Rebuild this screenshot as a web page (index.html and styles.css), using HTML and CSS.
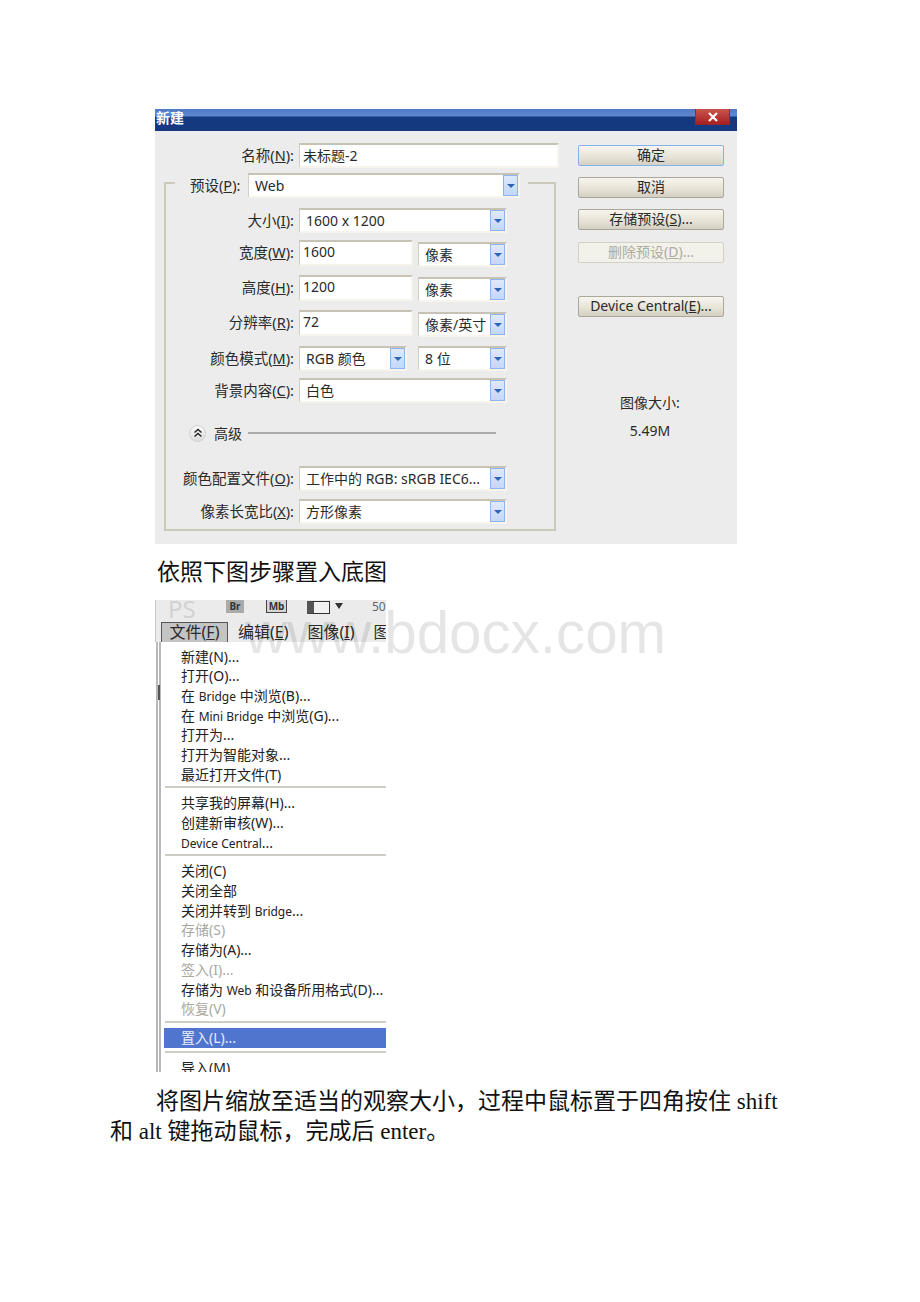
FILE: index.html
```html
<!DOCTYPE html>
<html lang="zh-CN">
    <head>
        <meta charset="UTF-8">
        <meta name="viewport" content="width=device-width, initial-scale=1.0">
        <title>新建</title>
        <link rel="stylesheet" href="styles.css">
    </head>
    <body>
        <div class="page">
            <div class="dialog">
                <div class="title-bar">
                    <span class="title-text">新建</span>
                    <span class="close-btn">
                        <svg width="12" height="10" viewBox="0 0 12 10"><path d="M2 1l8 8M10 1L2 9" stroke="#fff" stroke-width="2.2" fill="none"/></svg>
                    </span>
                </div>
                <div class="dialog-body">
                    <div class="form-col">
                        <div class="row row-name">
                            <label>名称(<u>N</u>):</label>
                            <div class="field name-field">未标题-2</div>
                        </div>
                        <div class="group">
                            <div class="preset-row">
                                <label>预设(<u>P</u>):</label>
                                <div class="field select preset-select"><span>Web</span><i class="arrow"></i></div>
                            </div>
                            <div class="row row-size">
                                <label>大小(<u>I</u>):</label>
                                <div class="field select"><span>1600 x 1200</span><i class="arrow"></i></div>
                            </div>
                            <div class="row row-dim">
                                <label>宽度(<u>W</u>):</label>
                                <div class="pair">
                                    <div class="field num">1600</div>
                                    <div class="field select unit"><span>像素</span><i class="arrow"></i></div>
                                </div>
                            </div>
                            <div class="row row-dim2">
                                <label>高度(<u>H</u>):</label>
                                <div class="pair">
                                    <div class="field num">1200</div>
                                    <div class="field select unit"><span>像素</span><i class="arrow"></i></div>
                                </div>
                            </div>
                            <div class="row row-dim2">
                                <label>分辨率(<u>R</u>):</label>
                                <div class="pair">
                                    <div class="field num">72</div>
                                    <div class="field select unit"><span>像素/英寸</span><i class="arrow"></i></div>
                                </div>
                            </div>
                            <div class="row row-mode">
                                <label>颜色模式(<u>M</u>):</label>
                                <div class="pair pair-mode">
                                    <div class="field select"><span>RGB 颜色</span><i class="arrow"></i></div>
                                    <div class="field select"><span>8 位</span><i class="arrow"></i></div>
                                </div>
                            </div>
                            <div class="row row-bg">
                                <label>背景内容(<u>C</u>):</label>
                                <div class="field select"><span>白色</span><i class="arrow"></i></div>
                            </div>
                            <div class="advanced">
                                <span class="adv-btn">
                                    <svg width="10" height="10" viewBox="0 0 10 10"><path d="M1.5 4.5L5 1.5l3.5 3M1.5 8.5L5 5.5l3.5 3" stroke="#222" stroke-width="1.4" fill="none"/></svg>
                                </span>
                                <span class="adv-text">高级</span>
                                <span class="adv-line"></span>
                            </div>
                            <div class="row row-icc">
                                <label>颜色配置文件(<u>O</u>):</label>
                                <div class="field select"><span>工作中的 RGB: sRGB IEC6...</span><i class="arrow"></i></div>
                            </div>
                            <div class="row row-ratio">
                                <label>像素长宽比(<u>X</u>):</label>
                                <div class="field select"><span>方形像素</span><i class="arrow"></i></div>
                            </div>
                        </div>
                    </div>
                    <div class="btn-col">
                        <div class="btn btn-default">确定</div>
                        <div class="btn">取消</div>
                        <div class="btn">存储预设(<u>S</u>)...</div>
                        <div class="btn btn-disabled">删除预设(<u>D</u>)...</div>
                        <div class="btn btn-device">Device Central(<u>E</u>)...</div>
                        <div class="info">图像大小:</div>
                        <div class="info info-value">5.49M</div>
                    </div>
                </div>
            </div>

            <p class="step-text">依照下图步骤置入底图</p>

            <div class="ps-shot">
                <div class="ps-toolbar">
                    <span class="ps-logo">PS</span>
                    <span class="ps-chip chip-br">Br</span>
                    <span class="ps-chip chip-mb">Mb</span>
                    <span class="ps-view"></span>
                    <span class="ps-tri"></span>
                    <span class="ps-zoom">50</span>
                </div>
                <div class="ps-menubar">
                    <span class="ps-top active">文件(<u>F</u>)</span>
                    <span class="ps-top">编辑(<u>E</u>)</span>
                    <span class="ps-top">图像(<u>I</u>)</span>
                    <span class="ps-top">图</span>
                </div>
                <div class="ps-menu">
                    <div class="item">新建(N)...</div>
                    <div class="item">打开(O)...</div>
                    <div class="item">在 <span class="en">Bridge</span> 中浏览(B)...</div>
                    <div class="item">在 <span class="en">Mini Bridge</span> 中浏览(G)...</div>
                    <div class="item">打开为...</div>
                    <div class="item">打开为智能对象...</div>
                    <div class="item">最近打开文件(T)</div>
                    <div class="sep"></div>
                    <div class="item">共享我的屏幕(H)...</div>
                    <div class="item">创建新审核(W)...</div>
                    <div class="item"><span class="en">Device Central</span>...</div>
                    <div class="sep"></div>
                    <div class="item">关闭(C)</div>
                    <div class="item">关闭全部</div>
                    <div class="item">关闭并转到 <span class="en">Bridge</span>...</div>
                    <div class="item off">存储(S)</div>
                    <div class="item">存储为(A)...</div>
                    <div class="item off">签入(I)...</div>
                    <div class="item">存储为 <span class="en">Web</span> 和设备所用格式(D)...</div>
                    <div class="item off">恢复(V)</div>
                    <div class="sep"></div>
                    <div class="item selected">置入(L)...</div>
                    <div class="sep sep-tight"></div>
                    <div class="item">导入(M)</div>
                </div>
            </div>

            <p class="para">将图片缩放至适当的观察大小，过程中鼠标置于四角按住 shift 和 alt 键拖动鼠标，完成后 enter。</p>

            <div class="watermark">www.bdocx.com</div>
        </div>
    </body>
</html>
```

FILE: styles.css
```css
* {
    margin: 0;
    padding: 0;
    box-sizing: border-box;
}

body {
    background: white;
    font-family: "Noto Sans", "Noto Sans CJK SC", sans-serif;
    color: #2a2a2a;
}

u {
    text-underline-offset: 1px;
}

.page {
    position: relative;
    width: 920px;
    min-height: 1302px;
    padding: 109px 138px 0 110px;
}

/* dialog */
.dialog {
    width: 582px;
    height: 435px;
    margin-left: 45px;
    background: #ececec;
    display: flex;
    flex-direction: column;
}

.title-bar {
    height: 22px;
    padding: 0 7px 0 1px;
    background: linear-gradient(#4f7ac6 0, #5f87cf 7px, #15397f 8px, #15397f 100%);
    display: flex;
    justify-content: space-between;
    align-items: flex-start;
}

.title-text {
    color: white;
    font-size: 14px;
    font-weight: 700;
    line-height: 18px;
}

.close-btn {
    width: 35px;
    height: 16px;
    background: linear-gradient(#c9564f, #a81f20);
    border: 1px solid #8d2a2a;
    border-top: none;
    display: flex;
    align-items: center;
    justify-content: center;
}

.dialog-body {
    display: flex;
    flex: 1;
}

.form-col {
    width: 401px;
    padding: 12px 0 0 9px;
}

.btn-col {
    width: 146px;
    margin-left: 22px;
    padding-top: 14px;
}

/* rows */
.row {
    display: grid;
    grid-template-columns: 128px 208px;
    column-gap: 5px;
    align-items: start;
}

.row label {
    font-size: 14.5px;
    line-height: 25px;
    text-align: right;
    white-space: nowrap;
}

.row-name {
    grid-template-columns: 130px 260px;
    margin-left: -9px;
    padding-left: 9px;
    margin-bottom: 14px;
}

.row-size { margin-top: 10px; }
.row-dim { margin-top: 7px; }
.row-dim2 { margin-top: 9px; }
.row-mode { margin-top: 10px; }
.row-bg { margin-top: 7px; }
.row-icc { margin-top: 21px; }
.row-ratio { margin-top: 8px; }

.row-dim .pair,
.row-dim2 .pair {
    height: 26px;
}

.field {
    height: 25px;
    font-size: 14px;
    line-height: 22px;
    background: white;
    border-top: 2px solid #c6c3b6;
    border-left: 1px solid #d2cfc4;
    border-right: 2px solid #f6f4ec;
    border-bottom: 2px solid #f6f4ec;
    white-space: nowrap;
    padding-left: 2px;
}

.name-field {
    padding-left: 3px;
}

.num {
    height: 26px;
    width: 114px;
    line-height: 20px;
    padding-left: 3px;
}

.select {
    display: flex;
    justify-content: space-between;
    padding: 0 0 0 6px;
}

.select span {
    overflow: hidden;
}

.arrow {
    width: 15px;
    height: 21px;
    margin-top: 0;
    background: linear-gradient(#dfe9fb, #c3d7f8);
    border: 1px solid #8db4ef;
    display: flex;
    align-items: center;
    justify-content: center;
    flex-shrink: 0;
}

.arrow::after {
    content: "";
    border-left: 4px solid transparent;
    border-right: 4px solid transparent;
    border-top: 4px solid #2f64b5;
}

.pair {
    display: flex;
    justify-content: space-between;
    align-items: flex-start;
}

.unit {
    width: 89px;
    margin-top: 2px;
}

.pair-mode .select:first-child {
    width: 108px;
}

.pair-mode .select:last-child {
    width: 89px;
}

/* group box */
.group {
    width: 392px;
    height: 349px;
    border: 2px solid #cbc8bc;
}

.preset-row {
    width: 353px;
    margin: -11px 0 0 9px;
    padding: 0 8px 0 15px;
    background: #ececec;
    display: flex;
    justify-content: space-between;
}

.preset-row label {
    font-size: 14.5px;
    line-height: 25px;
    white-space: nowrap;
}

.preset-select {
    width: 272px;
}

/* advanced toggle */
.advanced {
    height: 24px;
    margin-top: 18px;
    margin-left: 23px;
    display: flex;
    align-items: center;
}

.adv-btn {
    width: 17px;
    height: 17px;
    border-radius: 50%;
    background: linear-gradient(#fafafa, #dcdcdc);
    border: 1px solid #cfcfcf;
    display: flex;
    align-items: center;
    justify-content: center;
}

.adv-text {
    margin-left: 8px;
    font-size: 14px;
}

.adv-line {
    width: 248px;
    height: 2px;
    margin-left: 6px;
    background: #ababab;
}

/* buttons */
.btn {
    height: 21px;
    margin-bottom: 11px;
    font-size: 14px;
    line-height: 18px;
    text-align: center;
    white-space: nowrap;
    background: linear-gradient(#f7f5ef, #e6e2d6 60%, #d3cfc2);
    border: 1px solid #aaa79b;
    border-radius: 2px;
}

.btn-default {
    border: 1px solid #7fb4ee;
}

.btn-disabled {
    margin-top: 12px;
    color: #aeaca2;
    background: #f2f1ea;
    border-color: #d3d1c6;
}

.btn-device {
    margin-top: 33px;
}

.info {
    margin-top: 76px;
    height: 20px;
    padding-right: 2px;
    font-size: 14px;
    line-height: 20px;
    text-align: center;
}

.info-value {
    margin-top: 8px;
}

/* text */
.step-text {
    margin: 14px 0 13px 47px;
    font-family: "Liberation Serif", "Noto Sans CJK SC", serif;
    font-size: 23px;
    line-height: 29px;
    color: #111;
}

.para {
    margin-top: 15px;
    text-indent: 46px;
    font-family: "Liberation Serif", "Noto Sans CJK SC", serif;
    font-size: 23px;
    line-height: 30px;
    color: #111;
}

/* photoshop menu */
.ps-shot {
    width: 231px;
    height: 472px;
    margin-left: 45px;
    overflow: hidden;
    background: white;
}

.ps-toolbar {
    height: 22px;
    background: #ebebeb;
    display: flex;
    align-items: flex-start;
    overflow: hidden;
    border-left: 1px solid #c8c8c8;
}

.ps-logo {
    margin: -8px 0 0 12px;
    width: 58px;
    font-size: 24px;
    color: #d2d2d2;
}

.ps-chip {
    height: 13px;
    font-size: 10px;
    font-weight: 700;
    line-height: 12px;
    text-align: center;
    color: #333;
}

.chip-br {
    width: 18px;
    background: #aaa;
}

.chip-mb {
    width: 21px;
    margin-left: 22px;
    background: #d5d5d5;
    border: 1px solid #444;
    border-top: none;
}

.ps-view {
    width: 23px;
    height: 13px;
    margin: 1px 0 0 20px;
    background: #f2f2f2;
    border: 1px solid #333;
    border-left: 7px solid #555;
}

.ps-tri {
    margin: 3px 0 0 5px;
    border-left: 4px solid transparent;
    border-right: 4px solid transparent;
    border-top: 6px solid #333;
}

.ps-zoom {
    margin-left: 29px;
    font-size: 12px;
    line-height: 13px;
    color: #666;
}

.ps-menubar {
    height: 20px;
    background: #ebebeb;
    display: flex;
    padding-left: 5px;
    font-size: 16px;
    line-height: 20px;
    white-space: nowrap;
    border-left: 1px solid #c8c8c8;
    overflow: hidden;
}

.ps-top {
    flex-shrink: 0;
    margin-right: 19px;
}

.ps-top.active {
    width: 67px;
    margin-right: 10px;
    line-height: 18px;
    text-align: center;
    background: #c4c4c4;
    border: 1px solid #555;
    border-bottom: none;
}

.ps-menu {
    position: relative;
    margin-left: 1px;
    padding-top: 4.5px;
    border-left: 5px double #b9b9b9;
    font-size: 14px;
}

.ps-menu::before {
    content: "";
    position: absolute;
    left: -3px;
    top: 43px;
    width: 2px;
    height: 15px;
    background: #555;
}

.item {
    height: 19.7px;
    line-height: 19.7px;
    padding-left: 20px;
    white-space: nowrap;
    color: #222;
}

.en {
    font-size: 12px;
}

.item.off {
    color: #aaa99f;
}

.item.selected {
    height: 20px;
    line-height: 20px;
    margin-left: 3px;
    padding-left: 17px;
    background: #4f75cf;
    color: #e8edf9;
}

.sep {
    height: 2px;
    margin: 2px 0 5px 4px;
    background: #cfccc4;
}

.sep-tight {
    margin-top: 3px;
}

/* site watermark sits on top of the page */
.watermark {
    position: absolute;
    left: 245px;
    top: 595px;
    font-family: "Liberation Sans", sans-serif;
    font-size: 58.3px;
    line-height: 76px;
    color: rgba(0, 0, 0, 0.1);
    white-space: nowrap;
}
```
